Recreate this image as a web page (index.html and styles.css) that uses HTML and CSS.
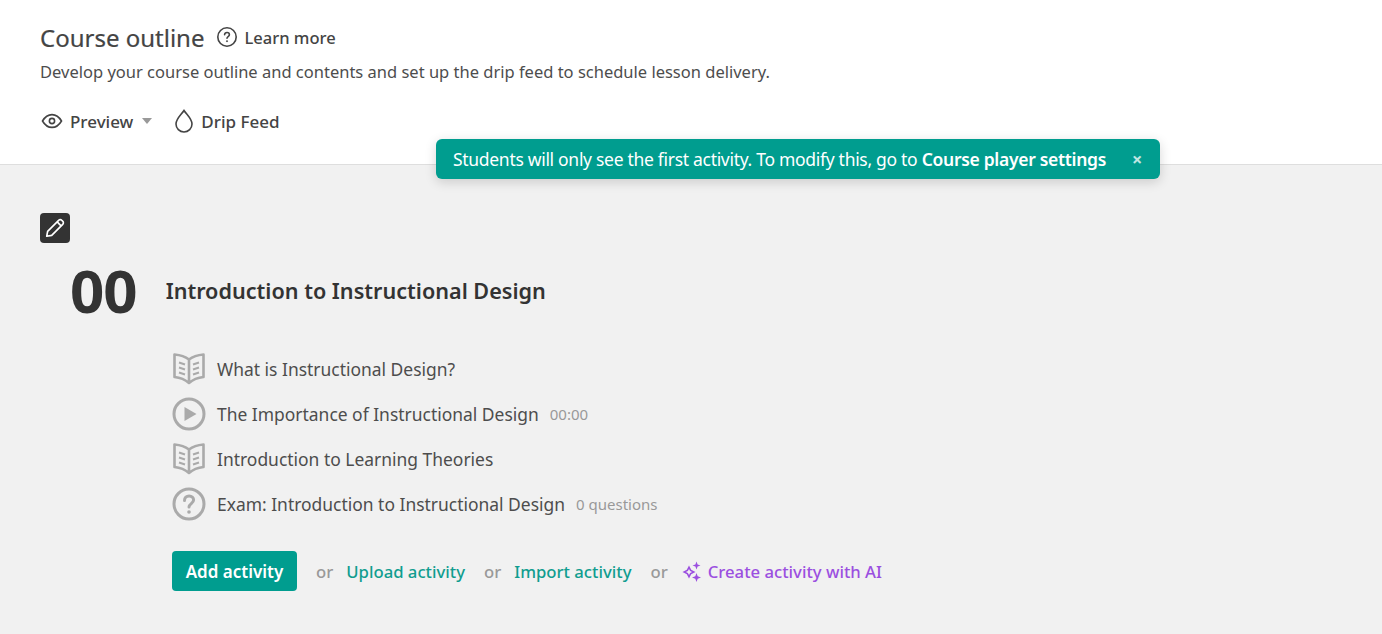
FILE: index.html
```html
<!doctype html>
<html lang="en">
<head>
  <meta charset="UTF-8">
  <meta name="viewport" content="width=device-width, initial-scale=1.0">
  <title>Course outline</title>
  <link rel="stylesheet" href="styles.css">
</head>
<body>
  <header class="top">
    <div class="title-row">
      <h1>Course outline</h1>
      <a class="learn" href="#">
        <svg width="22" height="22" viewBox="0 0 22 22" fill="none" stroke="#444" stroke-width="1.6"><circle cx="11" cy="11" r="9.2"/><path d="M8.6 8.8c0-1.4 1-2.3 2.4-2.3s2.4.9 2.4 2.2c0 1.9-2.4 1.9-2.4 3.6" stroke-linecap="round"/><circle cx="11" cy="15.2" r=".6" fill="#444" stroke-width=".8"/></svg>
        Learn more
      </a>
    </div>
    <p class="sub">Develop your course outline and contents and set up the drip feed to schedule lesson delivery.</p>
    <div class="tools">
      <a class="tool" href="#">
        <svg width="22" height="16" viewBox="0 0 22 16" fill="none" stroke="#444" stroke-width="1.6"><path d="M1.5 8C4 3.700 7.200 1.600 11 1.600S18 3.700 20.500 8C18 12.300 14.800 14.400 11 14.400S4 12.300 1.500 8Z"/><circle cx="11" cy="8" r="2.600"/></svg>
        Preview
        <span class="caret"></span>
      </a>
      <a class="tool" href="#">
        <svg width="18" height="24" viewBox="0 0 18 24" fill="none" stroke="#444" stroke-width="1.6"><path d="M9 1.500c3 4.500 8 8.500 8 13.500a8 8 0 0 1-16 0c0-5 5-9 8-13.500Z"/></svg>
        Drip Feed
      </a>
    </div>
  </header>

  <div class="toast">
    <span>Students will only see the first activity. To modify this, go to <b>Course player settings</b></span>
    <span class="toast-close">×</span>
  </div>

  <main class="content">
    <button class="edit">
      <svg width="22" height="22" viewBox="0 0 20 20" fill="none" stroke="#fff" stroke-width="1.500" stroke-linejoin="round"><path d="M2.500 17.500l.8-4.500L13.300 3a2 2 0 0 1 2.900 0l.8.800a2 2 0 0 1 0 2.900L7 16.700Z"/><path d="M12 4.500l3.500 3.500"/></svg>
    </button>
    <div class="section-head">
      <span class="num">00</span>
      <h2>Introduction to Instructional Design</h2>
    </div>
    <ul class="activities">
      <li>
        <svg class="ico" width="34" height="34" viewBox="0 0 34 34" fill="none" stroke="#aaa" stroke-width="2.600" stroke-linejoin="round"><path d="M17 7.500C13 4.500 7.500 3 2.500 2.500V25C7.500 25.500 13 27.500 17 31C21 27.500 26.500 25.500 31.500 25V2.500C26.500 3 21 4.500 17 7.500ZM17 7.500V31"/><path d="M7 10.500l6 2M7 15.500l6 2M7 20.500l6 2M27 10.500l-6 2M27 15.500l-6 2M27 20.500l-6 2" stroke-width="2"/></svg>
        <span>What is Instructional Design?</span>
      </li>
      <li>
        <svg class="ico" width="34" height="34" viewBox="0 0 34 34" fill="none" stroke="#aaa" stroke-width="3"><circle cx="17" cy="17" r="15"/><path d="M12.500 10l12 7-12 7Z" fill="#aaa" stroke="none"/></svg>
        <span>The Importance of Instructional Design</span>
        <small>00:00</small>
      </li>
      <li>
        <svg class="ico" width="34" height="34" viewBox="0 0 34 34" fill="none" stroke="#aaa" stroke-width="2.600" stroke-linejoin="round"><path d="M17 7.500C13 4.500 7.500 3 2.500 2.500V25C7.500 25.500 13 27.500 17 31C21 27.500 26.500 25.500 31.500 25V2.500C26.500 3 21 4.500 17 7.500ZM17 7.500V31"/><path d="M7 10.500l6 2M7 15.500l6 2M7 20.500l6 2M27 10.500l-6 2M27 15.500l-6 2M27 20.500l-6 2" stroke-width="2"/></svg>
        <span>Introduction to Learning Theories</span>
      </li>
      <li>
        <svg class="ico" width="34" height="34" viewBox="0 0 34 34" fill="none" stroke="#aaa" stroke-width="3"><circle cx="17" cy="17" r="15"/><path d="M12.500 13.500c0-2.800 2-4.500 4.600-4.500s4.500 1.700 4.500 4.100c0 3.500-4.600 3.500-4.600 7" stroke-linecap="round"/><circle cx="17" cy="25" r="1.800" fill="#aaa" stroke="none"/></svg>
        <span>Exam: Introduction to Instructional Design</span>
        <small>0 questions</small>
      </li>
    </ul>
    <div class="actions">
      <button class="add">Add activity</button>
      <span class="or">or</span>
      <a class="link" href="#">Upload activity</a>
      <span class="or">or</span>
      <a class="link" href="#">Import activity</a>
      <span class="or">or</span>
      <a class="link ai" href="#">
        <svg width="22" height="22" viewBox="0 0 22 22" fill="#9b4fe0"><path d="M8 5.500l2.200 4.300 4.300 2.200-4.300 2.200L8 18.500l-2.200-4.300L1.500 12l4.300-2.200ZM8 8.900l-1.100 2-2 1.100 2 1.100 1.100 2 1.100-2 2-1.100-2-1.100Z" fill-rule="evenodd"/><path d="M15.500 1.500l1.100 2.900 2.900 1.100-2.900 1.100-1.100 2.900-1.100-2.900-2.900-1.100 2.900-1.100ZM15.500 13l1.200 3.300 3.300 1.200-3.300 1.200-1.200 3.300-1.200-3.300-3.300-1.200 3.300-1.200Z"/></svg>
        Create activity with AI
      </a>
    </div>
  </main>
</body>
</html>
```

FILE: styles.css
```css
* {
  box-sizing: border-box;
}
html, body {
  height: 100%;
}
body {
  margin: 0;
  font-family: "Noto Sans", "Open Sans", sans-serif;
  color: #444;
  background: #f1f1f1;
  overflow: hidden;
}
a {
  text-decoration: none;
  color: inherit;
}
.top {
  height: 165px;
  background: #fff;
  border-bottom: 1px solid #dedede;
  padding: 20px 40px 0;
}
.title-row {
  display: flex;
  align-items: center;
  gap: 12px;
  height: 34px;
}
h1 {
  margin: 0;
  font-size: 24px;
  font-weight: 400;
  color: #444;
  -webkit-text-stroke: 0.2px #444;
}
.learn {
  display: flex;
  align-items: center;
  gap: 6px;
  font-size: 16.500px;
  font-weight: 500;
}
.sub {
  margin: 6px 0 0;
  font-size: 16.500px;
  line-height: 24px;
  color: #4d4d4d;
}
.tools {
  display: flex;
  gap: 23px;
  margin-top: 23px;
  padding-left: 1px;
}
.tool {
  display: flex;
  align-items: center;
  gap: 8px;
  height: 28px;
  font-size: 17px;
  font-weight: 500;
}
.tool:first-child {
  gap: 7px;
}
.caret {
  width: 0;
  height: 0;
  margin-left: 2px;
  border-left: 5.500px solid transparent;
  border-right: 5.500px solid transparent;
  border-top: 6px solid #999;
}
.toast {
  position: absolute;
  left: 436px;
  top: 139px;
  width: 724px;
  height: 40px;
  display: flex;
  align-items: center;
  justify-content: space-between;
  padding: 0 17px;
  background: #009d8f;
  color: #fff;
  font-size: 17.500px;
  letter-spacing: -0.3px;
  border-radius: 6px;
  box-shadow: 0 3px 12px rgba(0, 0, 0, 0.16);
}
.toast b {
  font-weight: 600;
}
.toast-close {
  font-size: 18px;
  font-weight: 700;
  opacity: 0.75;
  margin-right: 1px;
}
.content {
  padding: 48px 0 0 40px;
}
.edit {
  display: flex;
  align-items: center;
  justify-content: center;
  width: 30px;
  height: 30px;
  padding: 0;
  border: 0;
  border-radius: 4px;
  background: #333;
}
.section-head {
  display: flex;
  align-items: center;
  gap: 29px;
  margin: 12px 0 0 30px;
  height: 70px;
}
.num {
  font-size: 60px;
  font-weight: 700;
  color: #333;
  line-height: 1;
  letter-spacing: -1px;
}
h2 {
  margin: 0;
  font-size: 21.600px;
  font-weight: 600;
  color: #333;
}
.activities {
  list-style: none;
  margin: 21px 0 0 132px;
  padding: 0;
}
.activities li {
  display: flex;
  align-items: center;
  gap: 11px;
  height: 45px;
  font-size: 17.450px;
  color: #4d4d4d;
}
.activities .ico {
  flex: none;
}
.activities small {
  font-size: 15px;
  color: #999;
}
.actions {
  display: flex;
  align-items: center;
  margin: 25px 0 0 132px;
}
.add {
  width: 125px;
  height: 40px;
  padding: 0;
  border: 0;
  border-radius: 4px;
  background: #009d8f;
  color: #fff;
  font-family: inherit;
  font-size: 17px;
  font-weight: 600;
}
.or {
  margin: 0 13px 0 19px;
  font-size: 16.700px;
  font-weight: 500;
  color: #999;
}
.link {
  font-size: 16.700px;
  font-weight: 500;
  color: #109d8f;
}
.ai {
  display: flex;
  align-items: center;
  gap: 5px;
  color: #9b4fe0;
}
```
